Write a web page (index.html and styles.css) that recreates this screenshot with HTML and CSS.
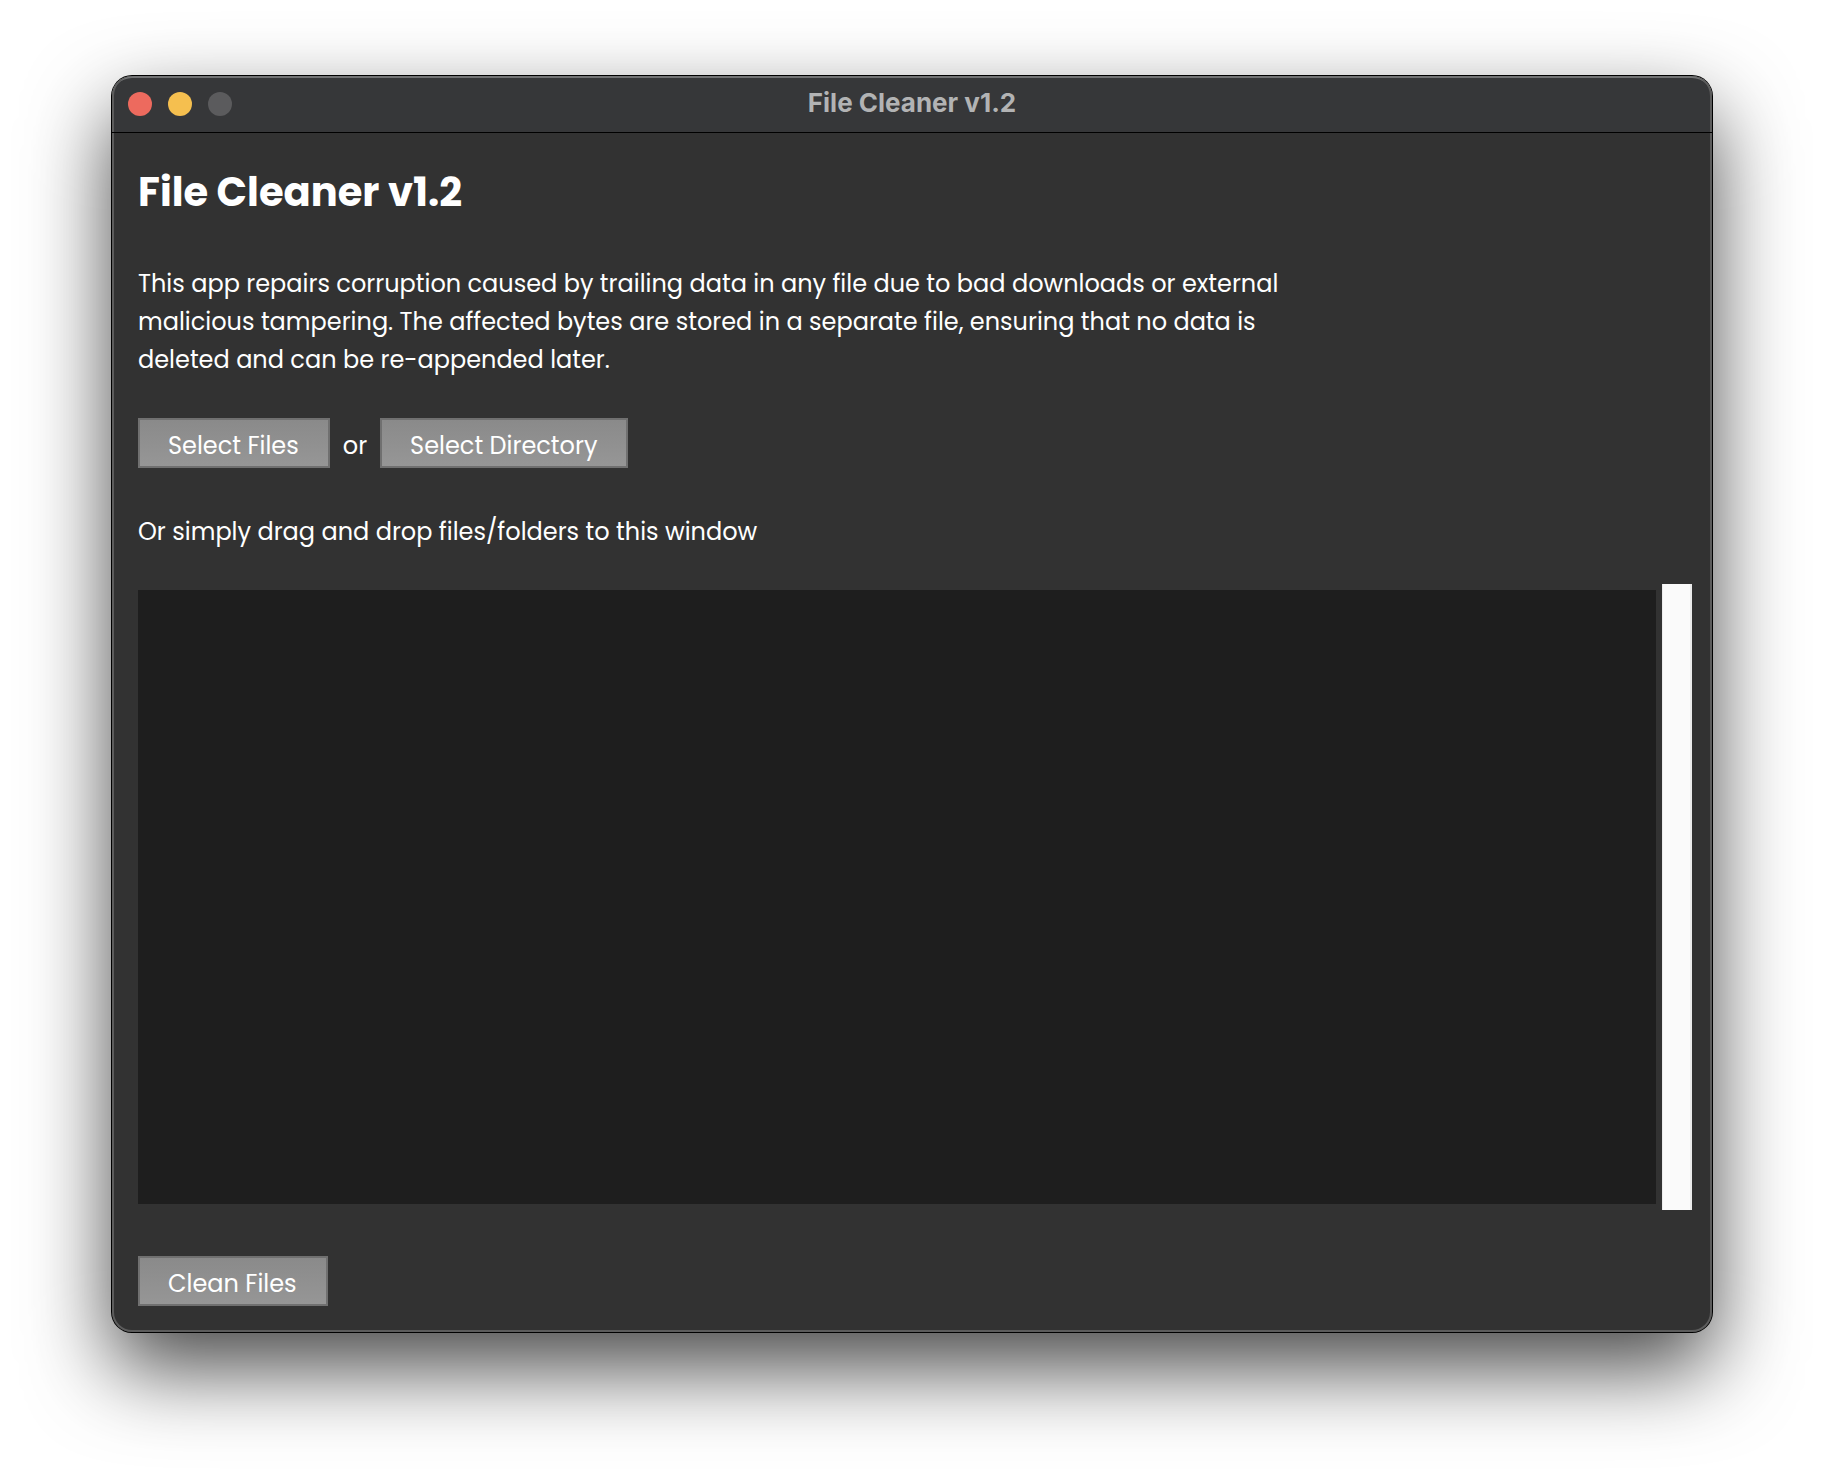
FILE: index.html
```html
<!DOCTYPE html>
<html lang="en">
<head>
<meta charset="utf-8">
<meta name="viewport" content="width=device-width, initial-scale=1">
<title>File Cleaner v1.2</title>
<link rel="stylesheet" href="styles.css">
</head>
<body>
<div class="window">
  <header class="titlebar">
    <div class="controls">
      <button class="control close" type="button" aria-label="Close"></button>
      <button class="control minimize" type="button" aria-label="Minimize"></button>
      <button class="control zoom" type="button" aria-label="Zoom" disabled></button>
    </div>
    <div class="window-title">File Cleaner v1.2</div>
  </header>
  <main class="content">
    <h1 class="heading">File Cleaner v1.2</h1>
    <p class="intro">This app repairs corruption caused by trailing data in any file due to bad downloads or external<br>malicious tampering. The affected bytes are stored in a separate file, ensuring that no data is<br>deleted and can be re-appended later.</p>
    <div class="pickers">
      <button class="button" type="button">Select Files</button>
      <span>or</span>
      <button class="button" type="button">Select Directory</button>
    </div>
    <p class="hint">Or simply drag and drop files/folders to this window</p>
    <div class="list">
      <textarea class="files" aria-label="Files to clean" readonly></textarea>
      <div class="scrollbar"></div>
    </div>
    <button class="button clean" type="button">Clean Files</button>
  </main>
</div>
</body>
</html>
```
FILE: styles.css
```css
* {
  box-sizing: border-box;
}

body {
  display: flex;
  min-height: 100vh;
  margin: 0;
  padding: 76px 112px 148px;
  background: #fff;
  color: #fff;
  font: 24px/38px Poppins, Inter, sans-serif;
}

.window {
  display: flex;
  flex: 1;
  flex-direction: column;
  border-radius: 20px;
  background: #323232;
  box-shadow: inset 0 0 0 2px #5c5c5c, 0 0 0 1px #000, 0 36px 84px rgba(0, 0, 0, 0.72);
}

.titlebar {
  display: grid;
  grid-template-columns: 1fr auto 1fr;
  align-items: center;
  height: 57px;
  padding: 0 16px 2px;
  border-bottom: 1px solid #000;
  border-radius: 20px 20px 0 0;
  background: #363739;
  box-shadow: inset 2px 0 #5c5c5c, inset -2px 0 #5c5c5c, inset 0 2px #727374;
}

.controls {
  display: flex;
  gap: 16px;
  padding-top: 2px;
}

.control {
  width: 24px;
  height: 24px;
  padding: 0;
  border: 0;
  border-radius: 50%;
}

.close {
  background: #ed6a5e;
}

.minimize {
  background: #f5bf4f;
}

.zoom {
  background: #5b5b5d;
}

.window-title {
  color: #b2b3b4;
  font: 700 26px/38px Inter, sans-serif;
}

.content {
  display: flex;
  flex: 1;
  flex-direction: column;
  padding: 35px 20px 26px 26px;
}

.heading {
  margin: 0;
  font-size: 40px;
  font-weight: 700;
  line-height: 48px;
}

.intro {
  margin: 49px 0 39px;
}

.pickers {
  display: flex;
  align-items: center;
  gap: 13px;
}

.button {
  height: 50px;
  padding: 6px 29px 0 28px;
  border: 2px solid #707070;
  background: linear-gradient(#8a8a8a, #969696);
  color: #fff;
  font: inherit;
}

.pickers span {
  padding-top: 6px;
}

.hint {
  margin: 45px 0 33px;
}

.list {
  display: flex;
  flex: 1;
  gap: 6px;
  margin-bottom: 46px;
}

.files {
  flex: 1;
  margin: 6px 0;
  padding: 8px;
  border: 0;
  outline: 0;
  background: #1e1e1e;
  color: #fff;
  font: inherit;
  resize: none;
}

.scrollbar {
  width: 30px;
  border: solid #ececec;
  border-width: 0 2px 0 1px;
  background: #fafafa;
}

.clean {
  align-self: flex-start;
}
```
